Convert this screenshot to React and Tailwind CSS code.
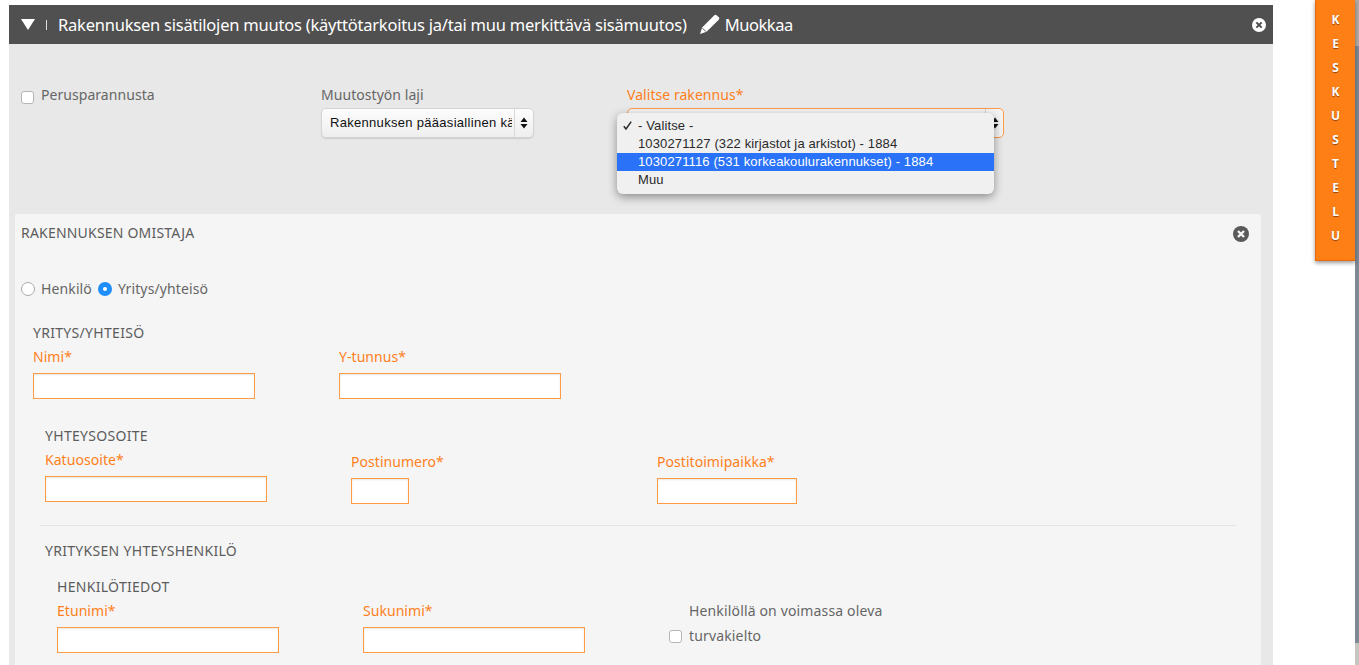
import React from "react";

const Label = ({ children, className = "" }) => (
  <div className={"text-[14px] leading-[20px] text-[#ff7f1a] tracking-[0.05px] " + className}>{children}</div>
);
const Heading = ({ children, className = "" }) => (
  <div className={"text-[14px] leading-[20px] text-[#5c5c5c] tracking-[0.3px] " + className}>{children}</div>
);
const Input = ({ className = "" }) => (
  <div className={"mt-[6px] h-[26px] border border-[#ff9a45] bg-white shadow-[inset_0_1px_2px_rgba(0,0,0,0.1)] " + className} />
);
const Check = ({ className = "" }) => (
  <span className={"block w-[13px] h-[13px] rounded-[3px] border border-[#b5b5b5] bg-white shrink-0 " + className} />
);
const CloseIcon = ({ fg, bg, className = "" }) => (
  <svg viewBox="0 0 16 16" className={"w-4 h-4 " + className}>
    <circle cx="8" cy="8" r="8" fill={bg} />
    <path d="M5 5l6 6M11 5l-6 6" stroke={fg} strokeWidth="2.4" strokeLinecap="butt" />
  </svg>
);
const Stepper = ({ color = "#111" }) => (
  <svg viewBox="0 0 8 12" className="w-[8px] h-[12px]">
    <path d="M4 0.5L7.5 5H0.5zM4 11.5L0.5 7H7.5z" fill={color} />
  </svg>
);

export default function App() {
  return (
    <div className="relative h-[665px] w-[1359px] overflow-hidden bg-white font-['Noto_Sans',sans-serif]">
      <div className="ml-[9px] pt-[5px] w-[1264px] h-full flex flex-col">
        <div className="h-[39px] shrink-0 bg-[#505050] flex items-center text-white pl-[12px] pr-[7px]">
          <svg viewBox="0 0 14 11" className="w-[14px] h-[11px] shrink-0"><path d="M0 0H14L7 11z" fill="#fff" /></svg>
          <span className="ml-[11px] w-px h-[10px] bg-[#ddd]" />
          <span className="ml-[11px] text-[16.5px] leading-[22px] whitespace-nowrap tracking-[-0.22px]">Rakennuksen sisätilojen muutos (käyttötarkoitus ja/tai muu merkittävä sisämuutos)</span>
          <svg viewBox="0 0 20 20" className="w-[21px] h-[21px] ml-[12px] shrink-0">
            <path d="M14.6 1.2a1.6 1.6 0 0 1 2.2 0l2 2a1.6 1.6 0 0 1 0 2.2L7.2 17 1 19l2-6.2z" fill="#fff" />
            <path d="M3.2 13.4L6.6 16.8" stroke="#505050" strokeWidth="0.9" />
          </svg>
          <span className="ml-[5px] text-[16.5px] leading-[22px] tracking-[-0.45px]">Muokkaa</span>
          <CloseIcon fg="#505050" bg="#fff" className="ml-auto w-[14px] h-[14px]" />
        </div>

        <div className="flex-1 bg-[#e8e8e8] px-[6px] pt-[41px] min-h-0 flex flex-col">
          <div className="relative h-[129px] shrink-0">
            <div className="grid grid-cols-[306px_306px_1fr]">
              <div className="flex items-start pl-[6px]">
                <Check className="mt-[6px]" />
                <span className="ml-[7px] text-[14px] leading-[20px] text-[#666] tracking-[0.05px]">Perusparannusta</span>
              </div>
              <div>
                <div className="text-[14px] leading-[20px] text-[#666] tracking-[0.05px]">Muutostyön laji</div>
                <div className="mt-[3px] h-[30px] w-[213px] rounded-[5px] border border-[#d4d4d4] bg-gradient-to-b from-[#fdfdfd] to-[#eeeeee] shadow-[0_1px_1px_rgba(0,0,0,0.12)] flex items-center">
                  <span className="ml-[8px] w-[182px] overflow-hidden whitespace-nowrap text-[13px] tracking-[0.3px] font-['Liberation_Sans',sans-serif] text-[#111]">Rakennuksen pääasiallinen kä</span>
                  <span className="ml-auto w-px h-full bg-[#d8d8d8]" />
                  <span className="w-[18px] flex justify-center"><Stepper /></span>
                </div>
              </div>
              <div className="relative">
                <Label>Valitse rakennus*</Label>
                <div className="mt-[3px] h-[30px] w-[377px] rounded-[5px] border border-[#ff9a45] bg-[#f4f4f4] flex items-center">
                  <span className="ml-auto w-px h-full bg-[#d0d0d0]" />
                  <span className="w-[17px] flex justify-center"><Stepper /></span>
                </div>
                <div className="absolute left-[-10px] top-[28px] w-[377px] h-[81px] rounded-[6px] bg-[#f0f0f0] shadow-[0_3px_10px_rgba(0,0,0,0.4)] pt-[4px] font-['Liberation_Sans',sans-serif] text-[13px] tracking-[0.13px] text-[#2a2a2a]">
                  <div className="relative h-[18px] leading-[18px] pl-[21px]">
                    <svg viewBox="0 0 9 9" className="absolute left-[6px] top-[4px] w-[9px] h-[9px]">
                      <path d="M0.8 5.2L3 8L8.2 0.6" fill="none" stroke="#2a2a2a" strokeWidth="1.5" />
                    </svg>
                    - Valitse -
                  </div>
                  <div className="h-[18px] leading-[18px] pl-[21px]">1030271127 (322 kirjastot ja arkistot) - 1884</div>
                  <div className="h-[18px] leading-[18px] pl-[21px] bg-[#2a72f8] text-white">1030271116 (531 korkeakoulurakennukset) - 1884</div>
                  <div className="h-[18px] leading-[18px] pl-[21px]">Muu</div>
                </div>
              </div>
            </div>
          </div>

          <div className="flex-1 w-[1246px] rounded-t-[2px] bg-[#f5f5f5] px-[6px] pt-[9px] relative min-h-0">
            <div className="flex items-center justify-between pr-[6px]">
              <span className="text-[14px] leading-[20px] text-[#5c5c5c] tracking-[0.2px]">RAKENNUKSEN OMISTAJA</span>
              <CloseIcon fg="#f5f5f5" bg="#5a5a5a" className="mt-[2px]" />
            </div>
            <div className="mt-[36px] flex items-center text-[14px] leading-[20px] text-[#666] tracking-[0.12px]">
              <span className="w-[14px] h-[14px] rounded-full border border-[#aaa] bg-white" />
              <span className="ml-[6px]">Henkilö</span>
              <span className="ml-[6px] w-[14px] h-[14px] rounded-full bg-[#1e8efc] flex items-center justify-center"><span className="w-[4px] h-[4px] rounded-full bg-white" /></span>
              <span className="ml-[6px]">Yritys/yhteisö</span>
            </div>

            <div className="pl-[12px] mt-[24px]">
              <Heading>YRITYS/YHTEISÖ</Heading>
              <div className="mt-[4px] grid grid-cols-[306px_1fr]">
                <div><Label>Nimi*</Label><Input className="w-[222px]" /></div>
                <div><Label>Y-tunnus*</Label><Input className="w-[222px]" /></div>
              </div>

              <div className="pl-[12px] mt-[27px]">
                <Heading>YHTEYSOSOITE</Heading>
                <div className="mt-[4px] grid grid-cols-[306px_306px_1fr]">
                  <div><Label>Katuosoite*</Label><Input className="w-[222px]" /></div>
                  <div className="pt-[2px]"><Label>Postinumero*</Label><Input className="w-[58px]" /></div>
                  <div className="pt-[2px]"><Label>Postitoimipaikka*</Label><Input className="w-[140px]" /></div>
                </div>
              </div>

              <div className="ml-[7px] mt-[21px] w-[1196px] border-t border-[#e4e4e4]" />

              <div className="pl-[12px] mt-[15px]">
                <Heading>YRITYKSEN YHTEYSHENKILÖ</Heading>
                <div className="pl-[12px] mt-[16px]">
                  <Heading>HENKILÖTIEDOT</Heading>
                  <div className="mt-[4px] grid grid-cols-[306px_306px_1fr]">
                    <div><Label>Etunimi*</Label><Input className="w-[222px]" /></div>
                    <div><Label>Sukunimi*</Label><Input className="w-[222px]" /></div>
                    <div className="relative pl-[20px] text-[14px] leading-[25px] text-[#666] tracking-[0.15px]">
                      <Check className="absolute left-0 top-[29px]" />
                      <div className="mt-[-3px]">Henkilöllä on voimassa oleva</div>
                      <div>turvakielto</div>
                    </div>
                  </div>
                </div>
              </div>
            </div>
          </div>
        </div>
      </div>

      <div className="absolute left-[1355px] top-0 h-full w-[4px] flex flex-col">
        <div className="h-[46px] bg-[#b3aca4]" />
        <div className="flex-1 bg-[#7f8994]" />
        <div className="h-[22px] bg-[#c6c5c0]" />
      </div>

      <div className="absolute left-[1315px] top-0 h-[261px] w-[40px] bg-[#ff7f17] border-l border-b border-[#e86a0c] shadow-[0_2px_4px_rgba(0,0,0,0.4)] flex flex-col items-center pt-[8px]">
        {"KESKUSTELU".split("").map((c, i) => (
          <span key={i} className="h-[24px] leading-[24px] text-[12px] font-bold text-white [text-shadow:0_1px_1px_rgba(0,0,0,0.45)]">{c}</span>
        ))}
      </div>
    </div>
  );
}
